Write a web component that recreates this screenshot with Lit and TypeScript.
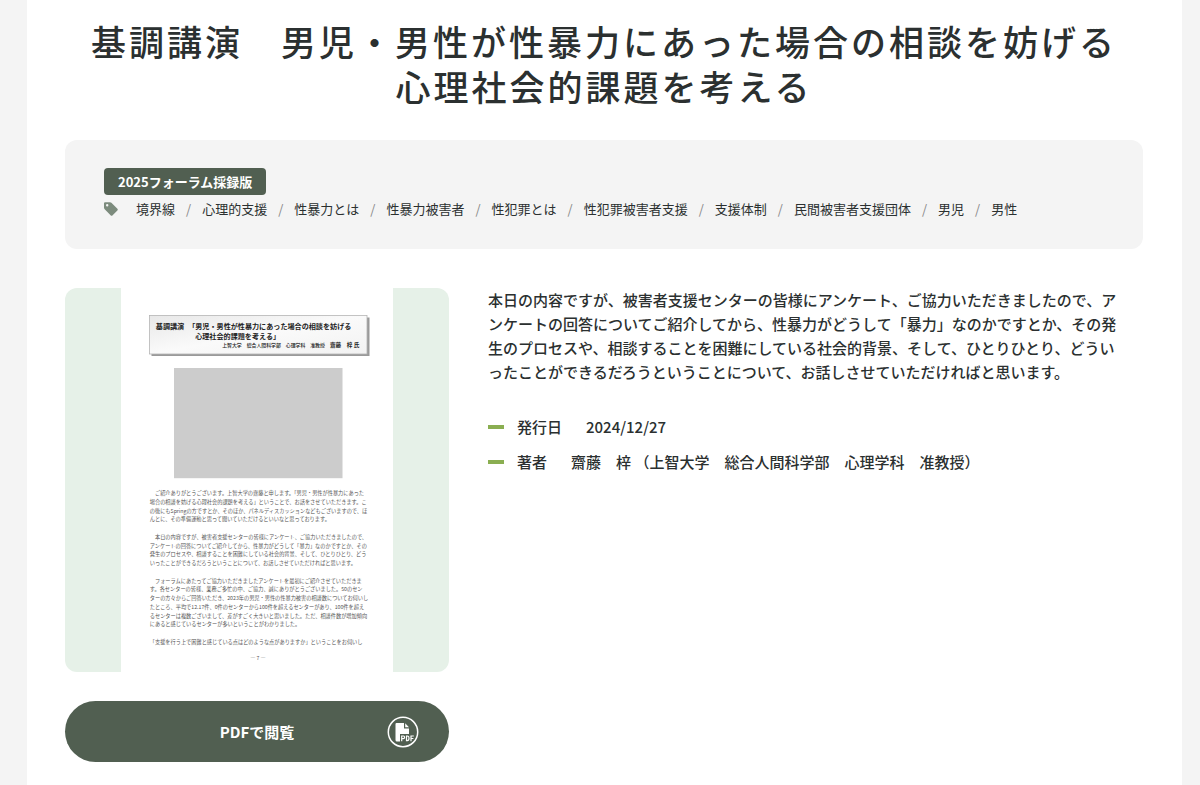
import { LitElement, html, css, svg } from "lit";
import { customElement } from "lit/decorators.js";

const TAGS = [
  "境界線", "心理的支援", "性暴力とは", "性暴力被害者", "性犯罪とは",
  "性犯罪被害者支援", "支援体制", "民間被害者支援団体", "男児", "男性",
];

const PAGE_LINES: Array<[number, string]> = [
  [2071, "　ご紹介ありがとうございます。上智大学の齋藤と申します。「男児・男性が性暴力にあった"],
  [2158, "場合の相談を妨げる心理社会的課題を考える」ということで、お話をさせていただきます。こ"],
  [2245, "の後にもSpringの方ですとか、そのほか、パネルディスカッションなどもございますので、ほ"],
  [2332, "んとに、その準備運動と思って聞いていただけるといいなと思っております。"],
  [2509, "　本日の内容ですが、被害者支援センターの皆様にアンケート、ご協力いただきましたので、"],
  [2597, "アンケートの回答についてご紹介してから、性暴力がどうして「暴力」なのかですとか、その"],
  [2684, "発生のプロセスや、相談することを困難にしている社会的背景、そして、ひとりひとり、どう"],
  [2771, "いったことができるだろうということについて、お話しさせていただければと思います。"],
  [2946, "　フォーラムにあたってご協力いただきましたアンケートを最初にご紹介させていただきま"],
  [3034, "す。各センターの皆様、業務ご多忙の中、ご協力、誠にありがとうございました。50のセン"],
  [3121, "ターの方々からご回答いただき、2023年の男児・男性の性暴力被害の相談数についてお伺いし"],
  [3209, "たところ、平均で12.17件、0件のセンターから100件を超えるセンターがあり、100件を超え"],
  [3296, "るセンターは複数ございまして、差がすごく大きいと思いました。ただ、相談件数が増加傾向"],
  [3384, "にあると感じているセンターが多いということがわかりました。"],
  [3560, "「支援を行う上で困難と感じている点はどのような点がありますか」ということをお伺いし"],
];

@customElement("document-cover")
export class DocumentCover extends LitElement {
  static styles = css`
    :host { display: block; border-radius: 12px; overflow: hidden; background: #e6f1e8; }
    .page { display: block; width: 100%; font-family: "Noto Sans CJK JP", sans-serif; font-weight: 400; }
    .body { font-size: 52px; fill: #555; }
    .heading { font-size: 71px; font-weight: 700; fill: #222; }
    .byline { font-size: 49px; font-weight: 500; fill: #222; }
    .name { font-size: 56px; font-weight: 700; }
  `;

  render() {
    return html`
      <svg class="page" viewBox="0 0 3840 3840" role="img" aria-label="資料の表紙">
        <defs>
          <linearGradient id="plate" x1="0" y1="0" x2="1" y2="1">
            <stop offset="0" stop-color="#e8e8e8"></stop>
            <stop offset="0.5" stop-color="#fafafa"></stop>
            <stop offset="1" stop-color="#f2f2f2"></stop>
          </linearGradient>
        </defs>
        <rect x="560" width="2720" height="3840" fill="#fff"></rect>
        <rect x="865" y="295" width="2180" height="385" fill="#9a9a9a"></rect>
        <rect x="845" y="275" width="2175" height="385" fill="url(#plate)" stroke="#b5b5b5" stroke-width="8"></rect>
        <text class="heading" x="908" y="410">基調講演</text>
        <text class="heading" x="1232" y="410">「男児・男性が性暴力にあった場合の相談を妨げる</text>
        <text class="heading" x="1302" y="506">心理社会的課題を考える」</text>
        <text class="byline" x="1572" y="592">上智大学　総合人間科学部　心理学科　准教授</text>
        <text class="byline name" x="2650" y="592">齋藤　梓 氏</text>
        <rect x="1090" y="800" width="1685" height="1102" fill="#ccc"></rect>
        ${PAGE_LINES.map(([y, line]) => svg`<text class="body" x="848" y=${y}>${line}</text>`)}
        <text class="body" x="1930" y="3720" text-anchor="middle">― 7 ―</text>
      </svg>
    `;
  }
}

@customElement("app-root")
export class AppRoot extends LitElement {
  static styles = css`
    :host {
      display: block;
      min-height: 100vh;
      box-sizing: border-box;
      padding: 0 18px 0 27px;
      background: #f4f4f4;
      color: #2b3030;
      font: 500 15px/25px "Noto Sans CJK JP", sans-serif;
    }
    * { box-sizing: border-box; }
    .sheet { min-height: 100vh; padding: 18px 39px 23px 38px; background: #fff; }
    .title {
      margin: 0 0 32px;
      font-size: 35px;
      font-weight: 500;
      line-height: 45px;
      letter-spacing: 3px;
      text-align: center;
    }
    .meta { padding: 28px 39px 26px; border-radius: 12px; background: #f4f4f4; }
    .badge {
      display: inline-block;
      padding: 0 14px;
      border-radius: 4px;
      background: #515f51;
      color: #fff;
      font-size: 13px;
      font-weight: 700;
      line-height: 27px;
      text-decoration: none;
      vertical-align: top;
    }
    .tags { display: flex; align-items: center; gap: 18px; font-size: 13px; font-weight: 400; line-height: 28px; }
    .tag-icon { flex: none; width: 14px; height: 14px; }
    .tag-list { display: flex; flex-wrap: wrap; margin: 0; padding: 0; list-style: none; }
    .tag-list li + li::before { content: "/"; margin: 0 11px; color: #888; }
    .tag { color: inherit; text-decoration: none; }
    .content { display: grid; grid-template-columns: 384fr 655fr; gap: 39px; margin-top: 39px; }
    .side { display: grid; gap: 29px; align-content: start; }
    .pdf {
      display: grid;
      grid-template-columns: 32px 1fr 32px;
      align-items: center;
      height: 61px;
      padding: 0 30px;
      border: 0;
      border-radius: 31px;
      background: #515f51;
      color: #fff;
      font: 700 15px/25px "Noto Sans CJK JP", sans-serif;
      text-align: center;
      cursor: pointer;
    }
    .pdf-label { grid-column: 2; }
    .pdf-icon { width: 32px; height: 32px; }
    .lead { margin: 0 20px 30px 0; line-height: 24px; }
    .facts { display: grid; gap: 10px; margin: 0; }
    .fact { display: flex; align-items: center; }
    .fact::before { content: ""; width: 16px; height: 4px; margin-right: 13px; background: #8aae51; }
    .fact dd { margin: 0 0 0 24px; }
  `;

  render() {
    return html`
      <main class="sheet">
        <h1 class="title">基調講演　男児・男性が性暴力にあった場合の相談を妨げる<br>心理社会的課題を考える</h1>
        <section class="meta">
          <a class="badge" href="#">2025フォーラム採録版</a>
          <div class="tags">
            <svg class="tag-icon" viewBox="0 0 14 14" aria-hidden="true">
              <path fill="#7c8b7d" fill-rule="evenodd" d="M0 1.3Q0 .2 1.1.2H6Q6.8.2 7.4.8L13.4 6.8Q14.2 7.6 13.4 8.4L8.4 13.4Q7.6 14.2 6.8 13.4L.7 7.3Q0 6.6 0 5.8ZM3.2 2.1A1.2 1.2 0 1 0 3.2 4.5A1.2 1.2 0 1 0 3.2 2.1Z"></path>
            </svg>
            <ul class="tag-list">
              ${TAGS.map((tag) => html`<li><a class="tag" href="#">${tag}</a></li>`)}
            </ul>
          </div>
        </section>
        <div class="content">
          <div class="side">
            <document-cover></document-cover>
            <button class="pdf" type="button">
              <span class="pdf-label">PDFで閲覧</span>
              <svg class="pdf-icon" viewBox="0 0 32 32" aria-hidden="true">
                <circle cx="16" cy="16" r="14.7" fill="none" stroke="#fff" stroke-width="1.5"></circle>
                <path fill="#fff" d="M9.5 7H17V12.5H22V18H13V25.5H10Q8.5 25.5 8.5 24V8Q8.5 7 9.5 7ZM18.2 7.2L22 11.3H18.2Z"></path>
                <path fill="none" stroke="#fff" stroke-width="1.2" d="M14.7 25.2V20H16.4Q17.6 20 17.6 21.3T16.4 22.6H14.7M19.5 20V24.6H20.3Q22 24.6 22 22.3T20.3 20ZM24 25.2V20H26.8M24 22.5H26.4"></path>
              </svg>
            </button>
          </div>
          <div>
            <p class="lead">本日の内容ですが、被害者支援センターの皆様にアンケート、ご協力いただきましたので、アンケートの回答についてご紹介してから、性暴力がどうして「暴力」なのかですとか、その発生のプロセスや、相談することを困難にしている社会的背景、そして、ひとりひとり、どういったことができるだろうということについて、お話しさせていただければと思います。</p>
            <dl class="facts">
              <div class="fact"><dt>発行日</dt><dd>2024/12/27</dd></div>
              <div class="fact"><dt>著者</dt><dd>齋藤　梓 （上智大学　総合人間科学部　心理学科　准教授）</dd></div>
            </dl>
          </div>
        </div>
      </main>
    `;
  }
}
